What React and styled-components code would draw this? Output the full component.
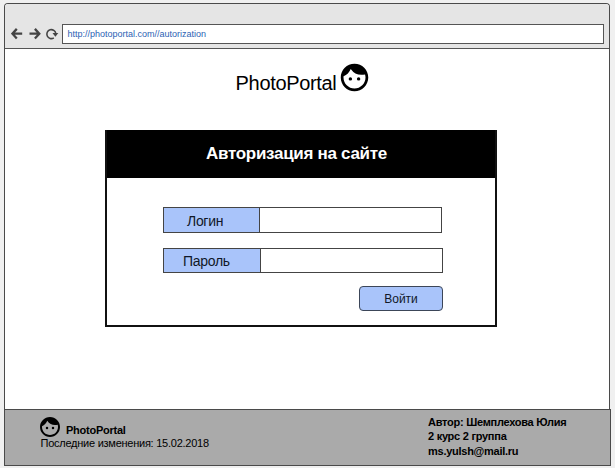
import React from 'react';
import styled, { createGlobalStyle } from 'styled-components';
import { MdFace } from 'react-icons/md';

const GlobalStyle = createGlobalStyle`
  * { box-sizing: border-box; }
  body {
    margin: 0;
    overflow: hidden;
    background: #f0f0f0;
    color: #000;
    font-family: "Liberation Sans", Arial, sans-serif;
  }
`;

const Page = styled.div`
  height: 468px;
  padding: 3px 4px 2px 4px;
`;

const BrowserWindow = styled.div`
  width: 606px;
  height: 406px;
  display: flex;
  flex-direction: column;
  background: #fff;
  border: 1px solid #4a4a4a;
  border-bottom: 0;
  border-radius: 4px 4px 0 0;
`;

const Toolbar = styled.header`
  height: 45px;
  flex: none;
  display: flex;
  align-items: flex-start;
  padding: 20px 5px 0 6px;
  background: #e5e5e5;
  border-bottom: 1px solid #555;
  border-radius: 3px 3px 0 0;
`;

const NavIcons = styled.svg`
  width: 51px;
  height: 20px;
  flex: none;
  fill: none;
  stroke: #444;
  stroke-width: 2.3;
`;

const AddressBar = styled.div`
  flex: 1;
  height: 20px;
  padding-left: 4.5px;
  background: #fff;
  border: 1px solid #555;
  color: #2c62b4;
  font-size: 9px;
  line-height: 18px;
`;

const Content = styled.main`
  display: flex;
  flex-direction: column;
  align-items: center;
`;

const Brand = styled.div`
  height: 33px;
  margin: 12px 0 0 -7px;
  display: flex;
  gap: 2px;
  font-size: 20px;
  line-height: 44px;
  letter-spacing: -0.34px;
`;

const Face = styled(MdFace)`
  width: ${(p) => p.$size}px;
  height: ${(p) => p.$size}px;
  flex: none;
`;

const Panel = styled.section`
  width: 392px;
  height: 197px;
  margin: 36px 0 0 -12px;
  border: 2px solid #111;
  border-top: 0;
`;

const PanelTitle = styled.h1`
  height: 48px;
  margin: 0;
  padding-right: 9px;
  background: #000;
  color: #fff;
  text-align: center;
  font-size: 17px;
  line-height: 48px;
  letter-spacing: -0.3px;
`;

const Form = styled.div`
  padding: 29px 0 0 56px;
`;

const Field = styled.div`
  display: flex;
  width: ${(p) => p.$width}px;
  height: ${(p) => p.$height}px;
  margin-bottom: ${(p) => p.$gap}px;
  border: 1px solid #444;
`;

const Label = styled.span`
  width: ${(p) => p.$width}px;
  padding-left: ${(p) => p.$indent}px;
  background: #a9c4fa;
  border-right: 1px solid #444;
  color: #101828;
  font-size: 14px;
  line-height: ${(p) => p.$line}px;
  letter-spacing: -0.3px;
`;

const SubmitButton = styled.button`
  display: block;
  width: 84px;
  height: 25px;
  margin-left: 196px;
  padding: 0;
  background: #a9c4fa;
  border: 1px solid #3c4658;
  border-radius: 4px;
  color: #101828;
  font: 12px/22px "Liberation Sans", Arial, sans-serif;
`;

const Footer = styled.footer`
  width: 607px;
  height: 57px;
  display: flex;
  justify-content: space-between;
  background: #aaa;
  border: 1px solid #4a4a4a;
`;

const SiteInfo = styled.div`
  padding: 5px 0 0 35.5px;
  font-size: 11px;
  line-height: 12px;
  letter-spacing: -0.25px;
`;

const SiteName = styled.div`
  height: 22px;
  display: flex;
  gap: 4px;
  margin-left: -2.5px;
  font-weight: bold;
  line-height: 31px;
`;

const Author = styled.div`
  width: 182px;
  padding-top: 5px;
  font-size: 11px;
  font-weight: bold;
  line-height: 14.4px;
  letter-spacing: -0.26px;
`;

export default function App() {
  return (
    <Page>
      <GlobalStyle />
      <BrowserWindow>
        <Toolbar>
          <NavIcons viewBox="0 0 51 20">
            <path d="M5.800 4.900 1.400 9.700l4.400 4.800M1.400 9.700h9.800" />
            <path d="M23.900 4.900 28.300 9.700l-4.400 4.800M28.300 9.700h-9.800" />
            <path d="M42.800 13.900A4.500 4.500 0 1 1 44.800 9.500" strokeWidth="1.600" />
            <path d="M41.500 9h5.800l-2.900 3.700z" fill="#444" stroke="none" />
          </NavIcons>
          <AddressBar>http://photoportal.com//autorization</AddressBar>
        </Toolbar>
        <Content>
          <Brand>
            <span>PhotoPortal</span>
            <Face $size={33} />
          </Brand>
          <Panel>
            <PanelTitle>Авторизация на сайте</PanelTitle>
            <Form>
              <Field $width={279} $height={26} $gap={15}>
                <Label $width={96} $indent={23} $line={26}>Логин</Label>
              </Field>
              <Field $width={280} $height={25} $gap={13}>
                <Label $width={97} $indent={19} $line={24}>Пароль</Label>
              </Field>
              <SubmitButton>Войти</SubmitButton>
            </Form>
          </Panel>
        </Content>
      </BrowserWindow>
      <Footer>
        <SiteInfo>
          <SiteName>
            <Face $size={24} />
            <span>PhotoPortal</span>
          </SiteName>
          <div>Последние изменения: 15.02.2018</div>
        </SiteInfo>
        <Author>
          <div>Автор: Шемплехова Юлия</div>
          <div>2 курс 2 группа</div>
          <div>ms.yulsh@mail.ru</div>
        </Author>
      </Footer>
    </Page>
  );
}
